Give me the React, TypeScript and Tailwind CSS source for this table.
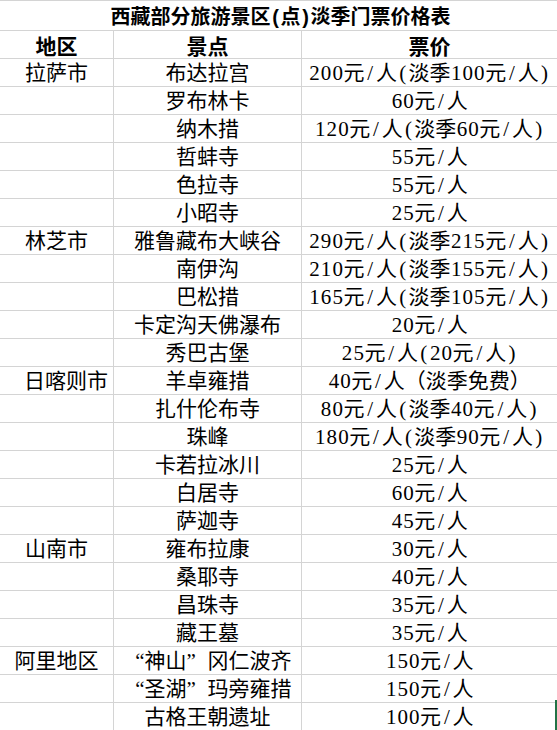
import React from 'react';

type Row = { region?: string; regionEnd?: boolean; spot: string; price: string };

const rows: Row[] = [
  { region: '拉萨市', spot: '布达拉宫', price: '200元/人(淡季100元/人)' },
  { spot: '罗布林卡', price: '60元/人' },
  { spot: '纳木措', price: '120元/人(淡季60元/人)' },
  { spot: '哲蚌寺', price: '55元/人' },
  { spot: '色拉寺', price: '55元/人' },
  { spot: '小昭寺', price: '25元/人' },
  { region: '林芝市', spot: '雅鲁藏布大峡谷', price: '290元/人(淡季215元/人)' },
  { spot: '南伊沟', price: '210元/人(淡季155元/人)' },
  { spot: '巴松措', price: '165元/人(淡季105元/人)' },
  { spot: '卡定沟天佛瀑布', price: '20元/人' },
  { spot: '秀巴古堡', price: '25元/人(20元/人)' },
  { region: '日喀则市', regionEnd: true, spot: '羊卓雍措', price: '40元/人（淡季免费）' },
  { spot: '扎什伦布寺', price: '80元/人(淡季40元/人)' },
  { spot: '珠峰', price: '180元/人(淡季90元/人)' },
  { spot: '卡若拉冰川', price: '25元/人' },
  { spot: '白居寺', price: '60元/人' },
  { spot: '萨迦寺', price: '45元/人' },
  { region: '山南市', spot: '雍布拉康', price: '30元/人' },
  { spot: '桑耶寺', price: '40元/人' },
  { spot: '昌珠寺', price: '35元/人' },
  { spot: '藏王墓', price: '35元/人' },
  { region: '阿里地区', spot: '“神山”冈仁波齐', price: '150元/人' },
  { spot: '“圣湖”玛旁雍措', price: '150元/人' },
  { spot: '古格王朝遗址', price: '100元/人' },
];

// 半角字符按宋体那样占固定宽度
function Txt({ s, narrow = false }: { s: string; narrow?: boolean }) {
  return (
    <>
      {Array.from(s).map((c, i) => {
        if (c === '“')
          return (
            <span key={i} className="inline-block w-[1em] text-right">
              {c}
            </span>
          );
        if (c === '”')
          return (
            <span key={i} className="inline-block w-[1em] text-left">
              {c}
            </span>
          );
        if (/[\x21-\x7e]/.test(c))
          return (
            <span key={i} className={`inline-block text-center ${narrow ? 'w-[0.5em]' : 'w-[0.55em]'}`}>
              {c}
            </span>
          );
        return <React.Fragment key={i}>{c}</React.Fragment>;
      })}
    </>
  );
}

export default function App() {
  const cell = 'h-[28px] flex items-center justify-center border-b border-[#d4d4d4] pt-[2px] whitespace-nowrap';

  return (
    <div className="relative w-[557px] h-[730px] overflow-hidden bg-white text-black font-['Liberation_Serif','Noto_Sans_CJK_SC',serif] text-[21px] leading-none">
      {/* 标题 */}
      <div className="h-[31px] flex items-center justify-center border-t border-b border-[#d4d4d4] pt-[3px] pl-[4px] font-['Liberation_Sans','Noto_Sans_CJK_SC',sans-serif] font-bold text-[20px]">
        <Txt s="西藏部分旅游景区(点)淡季门票价格表" narrow />
      </div>

      <div className="grid grid-cols-[114px_188px_1fr]">
        {/* 表头 */}
        <div className={`${cell} border-r font-['Noto_Sans_CJK_SC',sans-serif] font-bold`}>地区</div>
        <div className={`${cell} border-r font-['Noto_Sans_CJK_SC',sans-serif] font-bold`}>景点</div>
        <div className={`${cell} font-['Noto_Sans_CJK_SC',sans-serif] font-bold`}>票价</div>

        {rows.map((r, i) => (
          <React.Fragment key={i}>
            <div className={`${cell} border-r ${r.regionEnd ? 'justify-end pr-[5px]' : ''}`}>
              {r.region ?? ''}
            </div>
            <div className={`${cell} border-r`}>
              <Txt s={r.spot} narrow />
            </div>
            <div className={cell}>
              <Txt s={r.price} />
            </div>
          </React.Fragment>
        ))}
      </div>

      {/* 选中单元格边框 */}
      <div className="absolute right-0 top-[700px] w-[2px] h-[30px] bg-[#217346]" />
    </div>
  );
}
